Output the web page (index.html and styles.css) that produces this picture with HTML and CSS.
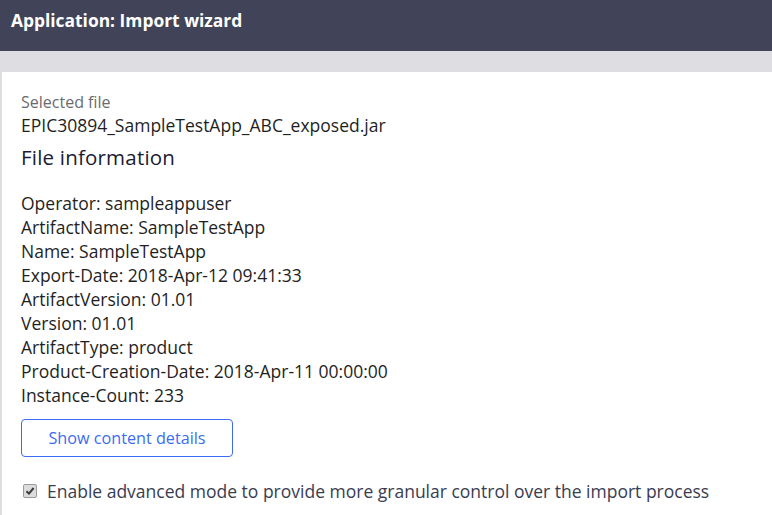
FILE: index.html
```html
<!DOCTYPE html>
<html>
<head>
<meta charset="utf-8">
<link rel="stylesheet" href="styles.css">
</head>
<body>
<div class="header">Application: Import wizard</div>
<div class="band"></div>
<div class="panel">
  <div class="label">Selected file</div>
  <div class="filename">EPIC30894_SampleTestApp_ABC_exposed.jar</div>
  <h2 class="heading">File information</h2>
  <div class="info">
    <div>Operator: sampleappuser</div>
    <div>ArtifactName: SampleTestApp</div>
    <div>Name: SampleTestApp</div>
    <div>Export-Date: 2018-Apr-12 09:41:33</div>
    <div>ArtifactVersion: 01.01</div>
    <div>Version: 01.01</div>
    <div>ArtifactType: product</div>
    <div>Product-Creation-Date: 2018-Apr-11 00:00:00</div>
    <div>Instance-Count: 233</div>
  </div>
  <button class="btn">Show content details</button>
  <label class="check">
    <span class="box"><svg width="10" height="10" viewBox="0 0 10 10"><path d="M1.5 5.2 L4 7.6 L8.6 2" fill="none" stroke="#3a3a3a" stroke-width="2"/></svg></span>
    <span>Enable advanced mode to provide more granular control over the import process</span>
  </label>
</div>
</body>
</html>
```
FILE: styles.css
```css
html, body {
  margin: 0;
  padding: 0;
  background: #dddde2;
  font-family: "Open Sans", "Noto Sans", sans-serif;
  height: 100%;
  overflow: hidden;
}
.header {
  height: 51px;
  background: #414358;
  color: #ffffff;
  font-weight: 700;
  font-size: 17.4px;
  line-height: 40px;
  padding-left: 11px;
  box-sizing: border-box;
}
.band {
  height: 21px;
}
.panel {
  margin-left: 2px;
  background: #ffffff;
  padding: 19px 19px 0 19px;
  height: 460px;
  box-sizing: border-box;
}
.label {
  font-size: 16px;
  color: #6b6b6f;
  line-height: 22px;
}
.filename {
  font-size: 17.5px;
  color: #1f1f1f;
  line-height: 26px;
  margin-top: -1px;
}
.heading {
  margin: 5px 0 0 0;
  font-size: 20.5px;
  font-weight: 500;
  color: #1a1b33;
  line-height: 28px;
  letter-spacing: 0.2px;
}
.info {
  margin-top: 20px;
  font-size: 17.5px;
  color: #1f1f1f;
  line-height: 24px;
}
.btn {
  display: block;
  margin-top: 12px;
  width: 212px;
  height: 38px;
  border: 1px solid #3c6df0;
  border-radius: 4px;
  background: #ffffff;
  color: #3c6df0;
  font-family: "Open Sans", "Noto Sans", sans-serif;
  font-size: 16.2px;
  padding: 0;
}
.check {
  display: flex;
  align-items: center;
  margin-top: 22px;
  margin-left: 2px;
  font-size: 17.5px;
  color: #3a3c50;
  line-height: 24px;
}
.box {
  width: 12px;
  height: 12px;
  border: 1px solid #9a9a9a;
  border-radius: 2px;
  background: #dcdcdc;
  display: flex;
  align-items: center;
  justify-content: center;
  margin-right: 10px;
}
```
